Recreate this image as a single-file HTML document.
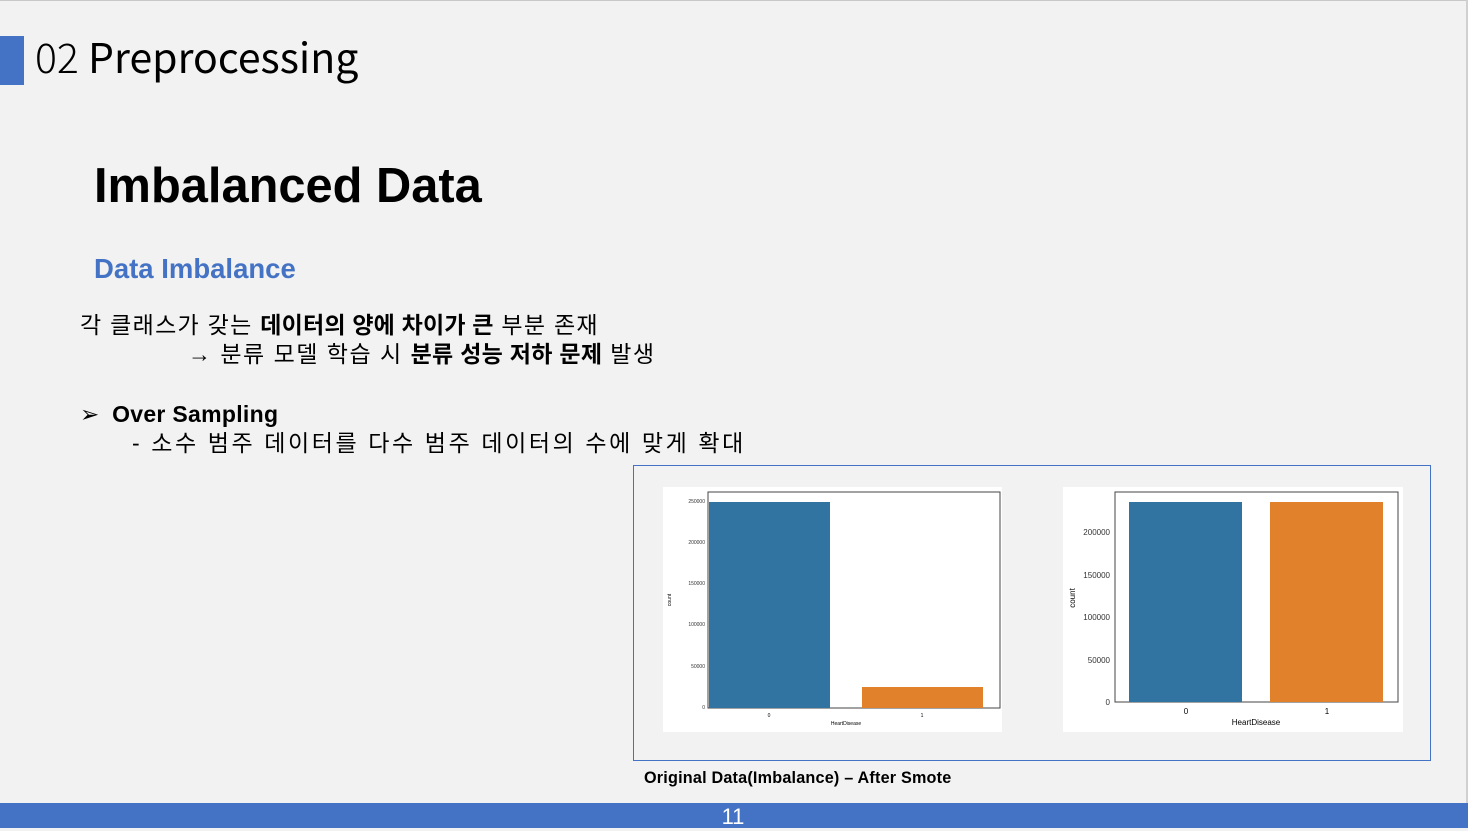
<!DOCTYPE html><html><head><meta charset="utf-8"><style>
body{margin:0;width:1468px;height:828px;background:#f2f2f2;position:relative;overflow:hidden;font-family:"Liberation Sans","Noto Sans CJK KR",sans-serif}
.a{position:absolute;white-space:nowrap}
.k{font-family:"Noto Sans CJK KR","Liberation Sans",sans-serif}
</style></head><body>
<div class="a" style="left:0;top:0;width:1468px;height:1px;background:#c8c8c8"></div>
<div class="a" style="left:1466px;top:0;width:2px;height:828px;background:#d0d0d0"></div>
<div class="a" style="left:0;top:36px;width:24px;height:49px;background:#4472c4"></div>
<div class="a k" style="left:35px;top:29px;font-size:41px;line-height:52px;color:#000"><span style="font-weight:300">02</span> Preprocessing</div>
<div class="a" style="left:94px;top:158px;font-size:48.8px;font-weight:bold;line-height:56px">Imbalanced Data</div>
<div class="a" style="left:94px;top:253px;font-size:27.5px;font-weight:bold;color:#4472c4;line-height:32px">Data Imbalance</div>
<div class="a" style="left:80px;top:310px;font-size:23px;line-height:30px;letter-spacing:1.3px">각 클래스가 갖는 <b style="letter-spacing:0.2px">데이터의 양에 차이가 큰</b> 부분 존재</div>
<div class="a" style="left:188px;top:339px;font-size:23px;line-height:30px;letter-spacing:1.5px">→ 분류 모델 학습 시 <b style="letter-spacing:0.3px">분류 성능 저하 문제</b> 발생</div>
<div class="a" style="left:80px;top:399px;font-size:23px;line-height:30px">➢&nbsp; <b style="letter-spacing:0.3px">Over Sampling</b></div>
<div class="a" style="left:132px;top:428px;font-size:23px;line-height:30px;letter-spacing:2.6px">- 소수 범주 데이터를 다수 범주 데이터의 수에 맞게 확대</div>
<div class="a" style="left:633px;top:465px;width:796px;height:294px;border:1px solid #4472c4"></div>
<svg class="a" style="left:663px;top:487px" width="339" height="245" font-family="Liberation Sans" font-size="5">
<rect width="339" height="245" fill="#fff"/>
<rect x="45" y="5" width="292" height="216" fill="none" stroke="#444" stroke-width="1"/>
<rect x="46" y="15" width="121" height="206" fill="#3274a1"/>
<rect x="199" y="200" width="121" height="21" fill="#e1812c"/>
<g text-anchor="end" fill="#333"><text x="42" y="16">250000</text><text x="42" y="57">200000</text><text x="42" y="98">150000</text><text x="42" y="139">100000</text><text x="42" y="181">50000</text><text x="42" y="222">0</text></g>
<text x="106" y="230" text-anchor="middle">0</text><text x="259" y="230" text-anchor="middle">1</text>
<text x="183" y="238" text-anchor="middle">HeartDisease</text>
<text transform="translate(8,113) rotate(-90)" text-anchor="middle">count</text>
</svg>
<svg class="a" style="left:1063px;top:487px" width="340" height="245" font-family="Liberation Sans" font-size="8">
<rect width="340" height="245" fill="#fff"/>
<rect x="52" y="5" width="283" height="210" fill="none" stroke="#444" stroke-width="1"/>
<rect x="66" y="15" width="113" height="200" fill="#3274a1"/>
<rect x="207" y="15" width="113" height="200" fill="#e1812c"/>
<g text-anchor="end" fill="#333"><text x="47" y="48">200000</text><text x="47" y="91">150000</text><text x="47" y="133">100000</text><text x="47" y="176">50000</text><text x="47" y="218">0</text></g>
<text x="123" y="227" text-anchor="middle">0</text><text x="264" y="227" text-anchor="middle">1</text>
<text x="193" y="238" text-anchor="middle">HeartDisease</text>
<text transform="translate(12,111) rotate(-90)" text-anchor="middle">count</text>
</svg>
<div class="a" style="left:644px;top:768px;font-size:16.2px;font-weight:bold;line-height:20px;letter-spacing:0.2px">Original Data(Imbalance) – After Smote</div>
<div class="a" style="left:0;top:803px;width:1468px;height:25px;background:#4472c4"></div>
<div class="a" style="left:0;top:803px;width:1466px;text-align:center;color:#fff;font-size:22px;line-height:28px">11</div>
</body></html>
